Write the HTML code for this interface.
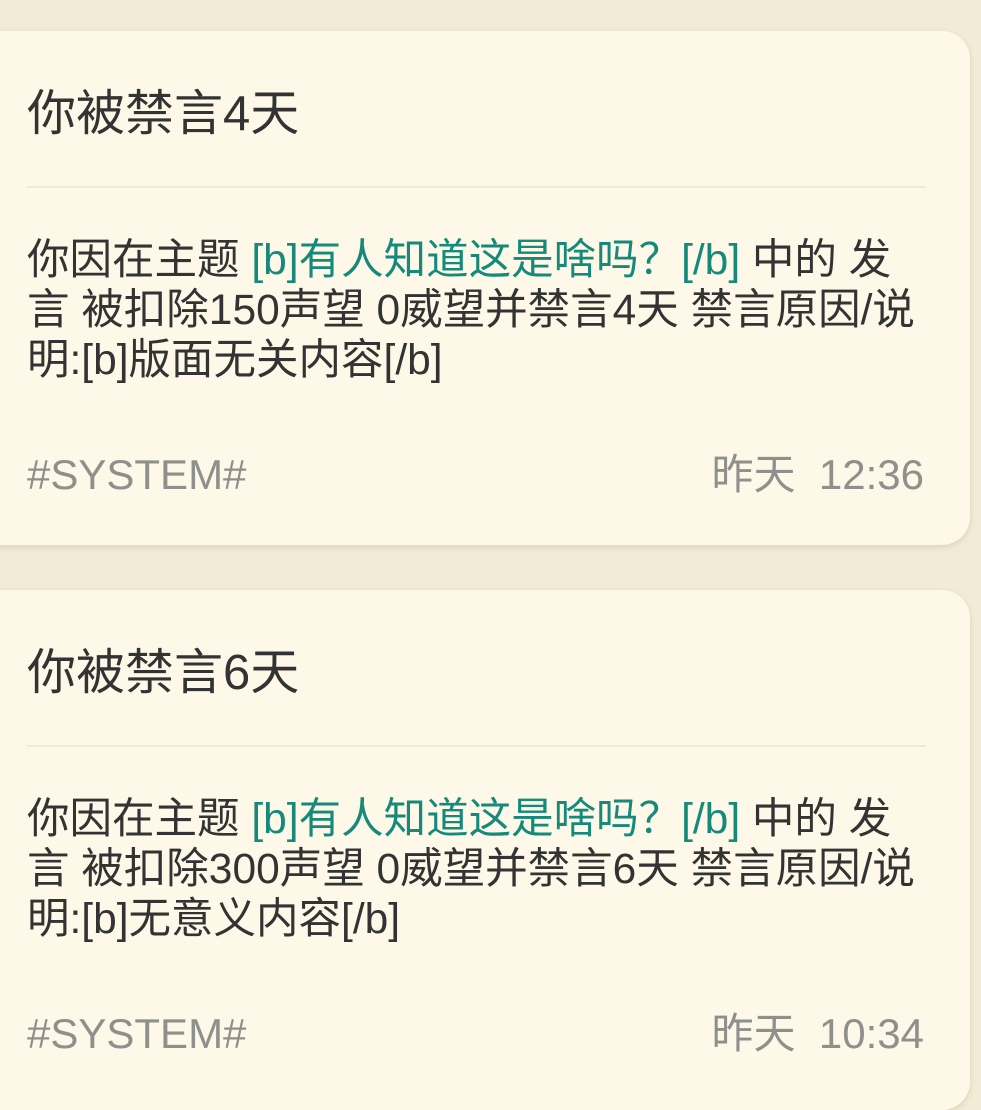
<!DOCTYPE html>
<html><head><meta charset="utf-8"><style>
body{margin:0;width:981px;height:1073px;background:#f2ecd7;font-family:"Liberation Sans","Noto Sans CJK SC",sans-serif;overflow:hidden;position:relative}
.card{position:absolute;left:-30px;width:1000px;background:#fdf8e7;border-radius:28px;box-shadow:0 2px 6px rgba(150,130,90,.25)}
.t{position:absolute;left:57px;font-size:49px;line-height:60px;color:#333;white-space:nowrap}
.hr{position:absolute;left:57px;width:899px;height:2px;background:#efeadb}
.b{position:absolute;left:57px;font-size:42.5px;line-height:50px;color:#333;white-space:nowrap}
.b span{color:#15897a}
.f{position:absolute;font-size:42px;line-height:50px;color:#8f8f8c;white-space:nowrap}
</style></head><body>
<div class="card" style="top:31px;height:514px">
<div class="t" style="top:53px">你被禁言4天</div>
<div class="hr" style="top:155px"></div>
<div class="b" style="top:205px">你因在主题 <span>[b]有人知道这是啥吗？[/b]</span> 中的 发<br>言 被扣除150声望 0威望并禁言4天 禁言原因/说<br>明:[b]版面无关内容[/b]</div>
<div class="f" style="top:419px;left:57px">#SYSTEM#</div>
<div class="f" style="top:419px;right:46px">昨天&nbsp; 12:36</div>
</div>
<div class="card" style="top:590px;height:520px">
<div class="t" style="top:53px">你被禁言6天</div>
<div class="hr" style="top:155px"></div>
<div class="b" style="top:205px">你因在主题 <span>[b]有人知道这是啥吗？[/b]</span> 中的 发<br>言 被扣除300声望 0威望并禁言6天 禁言原因/说<br>明:[b]无意义内容[/b]</div>
<div class="f" style="top:419px;left:57px">#SYSTEM#</div>
<div class="f" style="top:419px;right:46px">昨天&nbsp; 10:34</div>
</div>
</body></html>
